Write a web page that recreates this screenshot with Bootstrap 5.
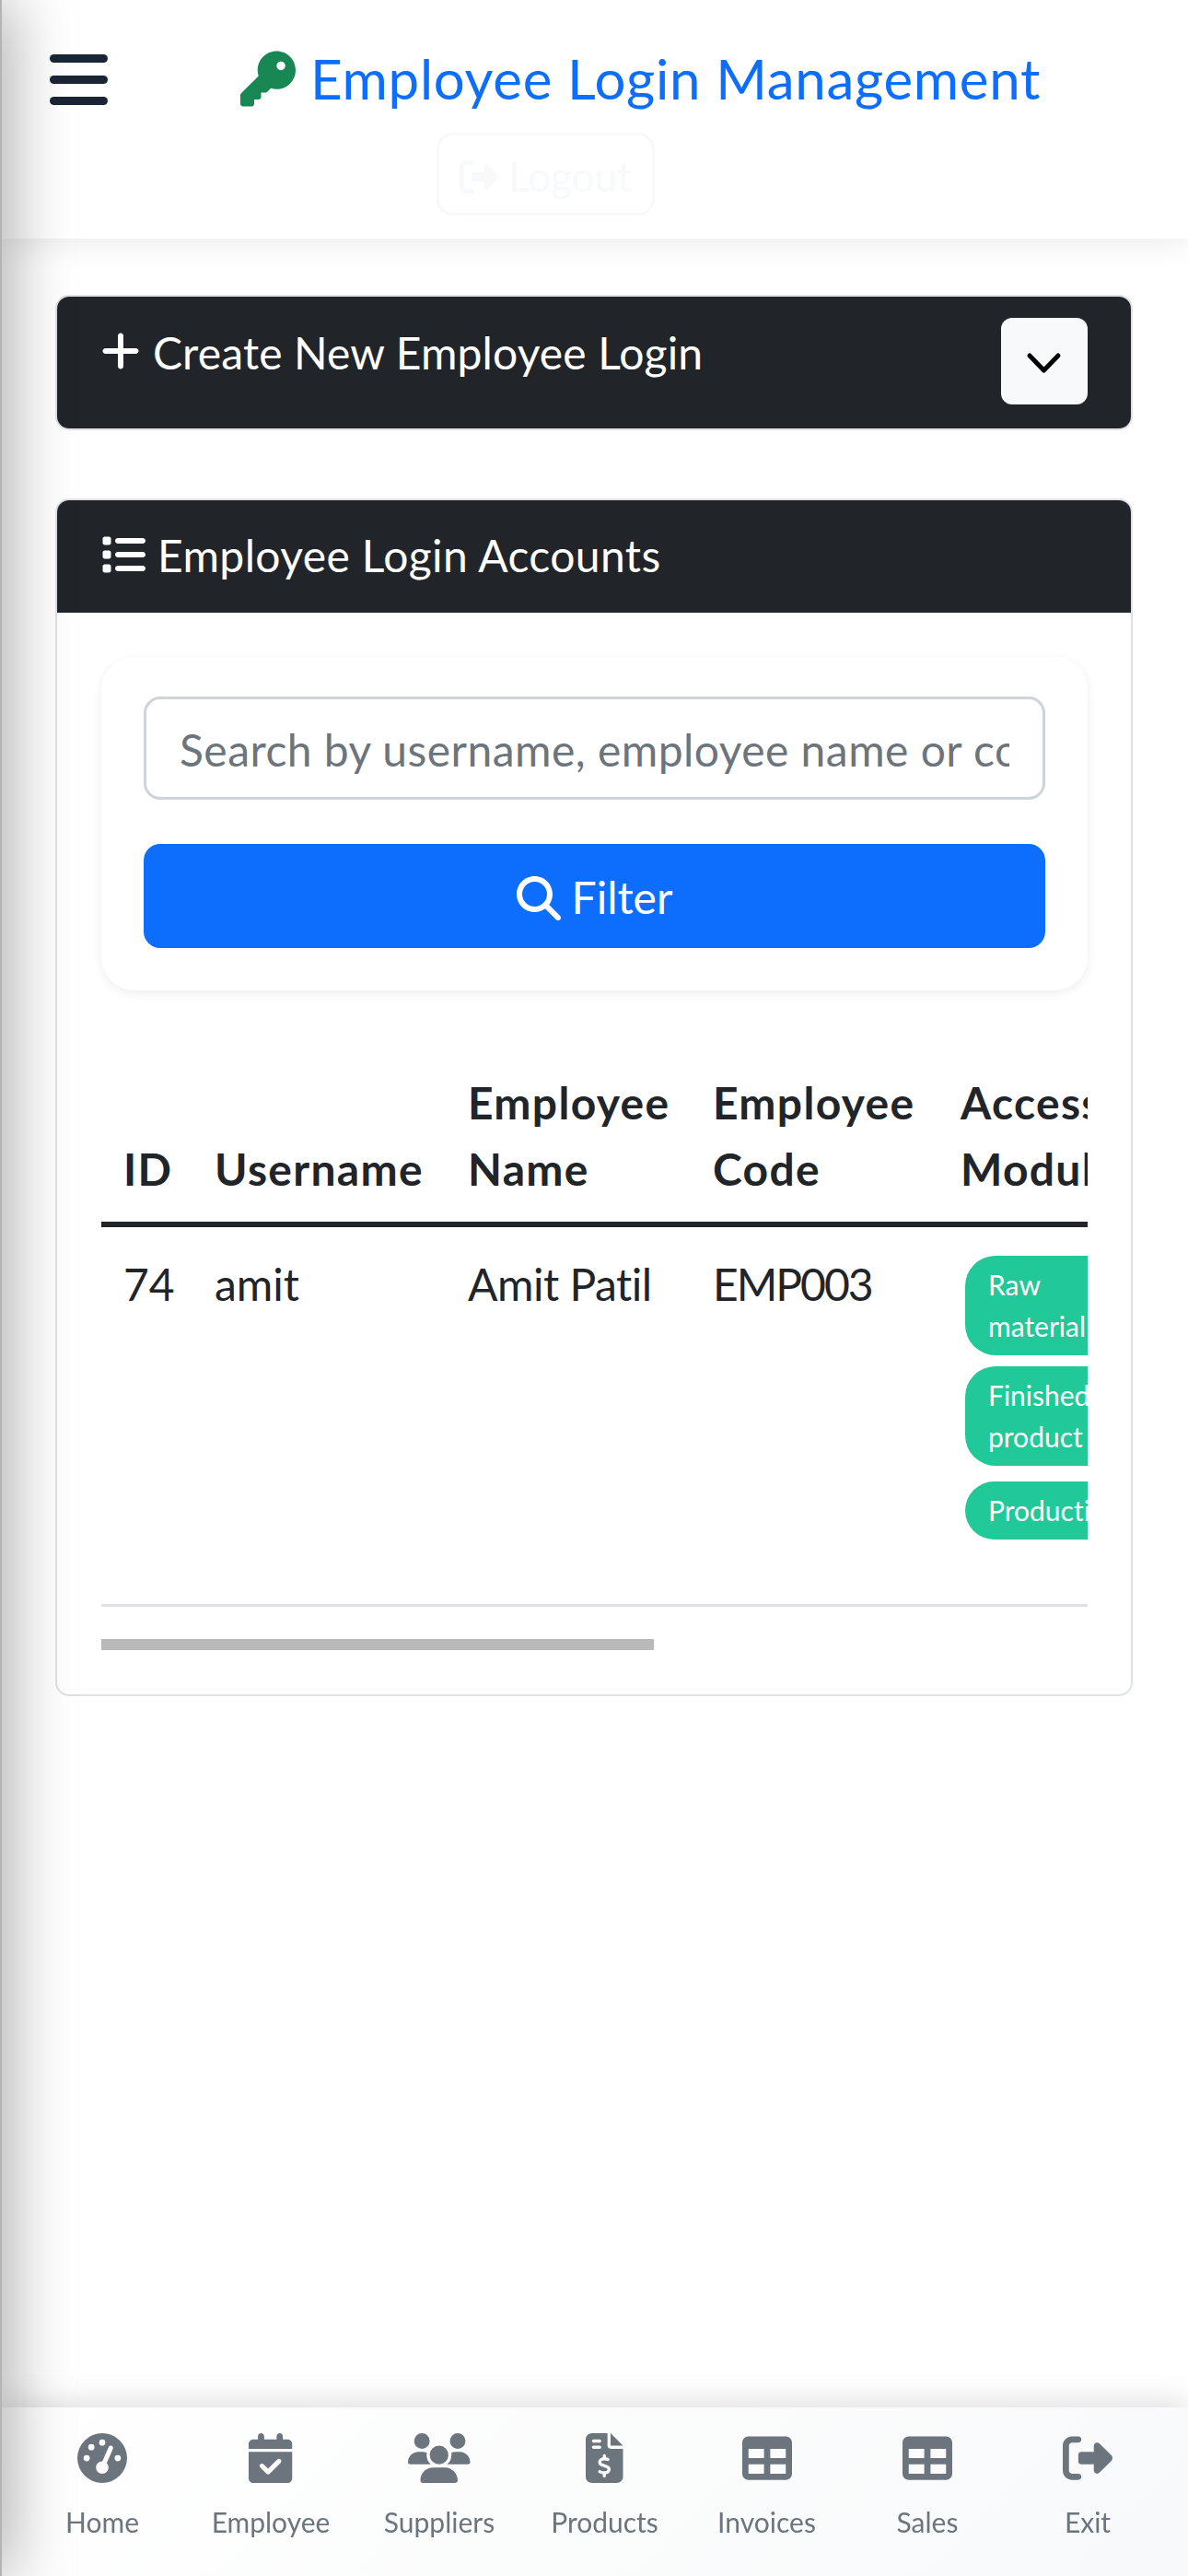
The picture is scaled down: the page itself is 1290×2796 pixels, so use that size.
<!DOCTYPE html>
<html lang="en">
<head>
    <meta charset="UTF-8" />
    <title>Employee Login Management</title>
    <link href="https://cdn.jsdelivr.net/npm/bootstrap@5.3.2/dist/css/bootstrap.min.css" rel="stylesheet" />
    <style>
        html, body { height: 2796px; overflow: hidden; }
        body { font-family: Lato, "Noto Sans", sans-serif; font-size: 48px; background: #fff; color: #212529; line-height: 1.5; font-variant-ligatures: none; }
        svg { fill: currentColor; display: inline-block; }

        .side-shade { position: fixed; top: 0; bottom: 0; left: -38px; width: 40px; background: #b4b4b4; box-shadow: 0 0 70px rgba(0,0,0,.5); z-index: 20; }

        .top-head { height: 259px; background: #fff; box-shadow: 0 6px 30px rgba(0,0,0,.08); padding: 55px 0 0 54px; }
        .burger { width: 63px; gap: 14px; margin-top: 4px; }
        .burger span { display: block; height: 9px; border-radius: 5px; background: #1a2636; }
        .page-title { font-size: 60px; line-height: 61px; color: #0d6efd; margin-left: 144px; white-space: nowrap; letter-spacing: .7px; }
        .page-title svg { width: 60px; height: 61px; color: #198754; margin-right: 16px; vertical-align: top; }
        .logout-btn { width: 237px; height: 90px; margin: 28px 0 0 420px; border: 3px solid #f8f9fa; border-radius: 18px; color: #f8f9fa; background: #fff; font-size: 44px; line-height: 88px; padding: 0; }
        .logout-btn svg { width: 42px; height: 44px; vertical-align: -6px; }

        .page-body { padding: 61px 60px 0; }
        .box-card { border: 2px solid #dee2e6; border-radius: 15px; overflow: hidden; }
        .box-head { background: #212529; color: #fff; }
        .create-head { height: 143px; padding: 0 47px 0 48px; font-size: 48px; letter-spacing: .15px; }
        .create-head .ttl { padding-bottom: 22px; }
        .create-head .ttl svg { width: 42px; height: 48px; margin-right: 14px; vertical-align: -4px; }
        .toggle-btn { width: 94px; height: 94px; margin-bottom: 3px; background: #f8f9fa; border: 0; border-radius: 12px; padding: 0; color: #000; }
        .toggle-btn svg { width: 94px; height: 94px; display: block; fill: none; stroke: #000; stroke-width: 5; stroke-linecap: round; stroke-linejoin: round; }
        .list-card { margin-top: 74px; }
        .list-head { height: 122px; padding: 0 48px; font-size: 48px; line-height: 120px; letter-spacing: .4px; }
        .list-head svg { width: 48px; height: 48px; margin-right: 13px; vertical-align: -5px; }
        .list-body { padding: 48px 47px 48px 48px; }
        .filter-panel { border-radius: 36px; padding: 43px 46px 46px; box-shadow: 0 3px 12px rgba(0,0,0,.07); gap: 48px; }
        .search-box { height: 112px; font-size: 48px; padding: 2px 36px 0; border: 3px solid #ced4da; border-radius: 18px; letter-spacing: .46px; }
        .search-box::placeholder { color: #6c757d; }
        .filter-btn { height: 113px; font-size: 48px; padding-top: 4px; border-radius: 18px; border: 0; background: #0d6efd; color: #fff; }
        .filter-btn svg { width: 48px; height: 48px; margin-right: 12px; vertical-align: -7px; }

        .table-scroll { margin-top: 62px; overflow: hidden; }
        .emp-table { width: 1912px; table-layout: fixed; margin: 0 0 35px; font-size: 48px; }
        .emp-table th, .emp-table td { padding: 24px; line-height: 72px; color: #212529; vertical-align: top; }
        .emp-table thead th { vertical-align: bottom; border-bottom: 6px solid #212529; font-weight: 700; padding-bottom: 21px; letter-spacing: 1.3px; }
        .emp-table tbody td { border-bottom: 3px solid #dee2e6; padding-top: 26px; padding-bottom: 70px; }
        .emp-table td.code-cell { letter-spacing: -2px; }
        .emp-table td.name-cell { letter-spacing: -.5px; }
        .module-pill { display: block; width: 200px; margin: 5px 0 12px 5px; padding: 9px 25px; background: #20c997; color: #fff; font-size: 30px; line-height: 45px; border-radius: 33px; font-weight: 400; }
        .module-pill:nth-child(2) { margin: 0 0 17px 5px; }
        .module-pill:nth-child(3) { margin: 0 0 0 5px; }
        .scroll-thumb { width: 600px; height: 12px; background: #b9b9b9; }

        .bottom-bar { position: fixed; left: 0; right: 0; bottom: 0; height: 183px; background: linear-gradient(135deg, #fff, #f8f9fa); box-shadow: 0 -6px 30px rgba(0,0,0,.13); padding: 28px 0 0 20px; display: grid; grid-template-columns: 182px 184px 182px 177px 175px 174px 174px; z-index: 10; }
        .bar-item { color: #6c757d; text-decoration: none; font-size: 30px; line-height: 45px; }
        .bar-item svg { height: 54px; width: auto; display: block; margin: 0 auto 20px; }
    </style>
</head>
<body>
<div class="side-shade"></div>

<header class="top-head">
    <div class="d-flex align-items-start">
        <div class="burger d-flex flex-column"><span></span><span></span><span></span></div>
        <div class="page-title">
            <svg viewBox="0 0 512 512"><path d="M336 352c97.2 0 176-78.8 176-176S433.2 0 336 0S160 78.8 160 176c0 18.7 2.9 36.8 8.3 53.7L7 391c-4.5 4.5-7 10.6-7 17v80c0 13.3 10.7 24 24 24h80c13.3 0 24-10.7 24-24V448h40c13.3 0 24-10.7 24-24V384h40c6.4 0 12.5-2.5 17-7l33.3-33.3c16.9 5.4 35 8.3 53.7 8.3zM376 96a40 40 0 1 1 0 80 40 40 0 1 1 0-80z"/></svg>Employee Login Management
        </div>
    </div>
    <button class="logout-btn d-block" type="button">
        <svg viewBox="0 0 512 512"><path d="M377.9 105.9L500.7 228.7c7.2 7.2 11.3 17.1 11.3 27.3s-4.1 20.1-11.3 27.3L377.9 406.1c-6.4 6.4-15 9.9-24 9.9c-18.7 0-33.9-15.2-33.9-33.9l0-62.1-128 0c-17.7 0-32-14.3-32-32l0-64c0-17.7 14.3-32 32-32l128 0 0-62.1c0-18.7 15.2-33.9 33.9-33.9c9 0 17.6 3.6 24 9.9zM160 96L96 96c-17.7 0-32 14.3-32 32l0 256c0 17.7 14.3 32 32 32l64 0c17.7 0 32 14.3 32 32s-14.3 32-32 32l-64 0c-53 0-96-43-96-96L0 128C0 75 43 32 96 32l64 0c17.7 0 32 14.3 32 32s-14.3 32-32 32z"/></svg> Logout
    </button>
</header>

<main class="page-body">
    <div class="box-card">
        <div class="box-head create-head d-flex justify-content-between align-items-center">
            <span class="ttl"><svg viewBox="0 0 448 512"><path d="M256 80c0-17.7-14.3-32-32-32s-32 14.3-32 32V224H48c-17.7 0-32 14.3-32 32s14.3 32 32 32H192V432c0 17.7 14.3 32 32 32s32-14.3 32-32V288H400c17.7 0 32-14.3 32-32s-14.3-32-32-32H256V80z"/></svg>Create New Employee Login</span>
            <button class="toggle-btn" type="button"><svg viewBox="0 0 94 94"><path d="M31 41l15.5 16L62 41"/></svg></button>
        </div>
    </div>

    <div class="box-card list-card">
        <div class="box-head list-head">
            <svg viewBox="0 0 512 512"><path d="M40 48C26.7 48 16 58.7 16 72v48c0 13.3 10.7 24 24 24H88c13.3 0 24-10.7 24-24V72c0-13.3-10.7-24-24-24H40zM192 64c-17.7 0-32 14.3-32 32s14.3 32 32 32H480c17.7 0 32-14.3 32-32s-14.3-32-32-32H192zm0 160c-17.7 0-32 14.3-32 32s14.3 32 32 32H480c17.7 0 32-14.3 32-32s-14.3-32-32-32H192zm0 160c-17.7 0-32 14.3-32 32s14.3 32 32 32H480c17.7 0 32-14.3 32-32s-14.3-32-32-32H192zM16 232v48c0 13.3 10.7 24 24 24H88c13.3 0 24-10.7 24-24V232c0-13.3-10.7-24-24-24H40c-13.3 0-24 10.7-24 24zM40 368c-13.3 0-24 10.7-24 24v48c0 13.3 10.7 24 24 24H88c13.3 0 24-10.7 24-24V392c0-13.3-10.7-24-24-24H40z"/></svg>Employee Login Accounts
        </div>
        <div class="list-body">
            <form class="filter-panel d-flex flex-column">
                <input class="form-control search-box" type="text" placeholder="Search by username, employee name or code" />
                <button class="filter-btn" type="button"><svg viewBox="0 0 512 512"><path d="M416 208c0 45.9-14.9 88.3-40 122.7L502.6 457.4c12.5 12.5 12.5 32.8 0 45.3s-32.8 12.5-45.3 0L330.7 376c-34.4 25.2-76.8 40-122.7 40C93.1 416 0 322.9 0 208S93.1 0 208 0S416 93.1 416 208zM208 352a144 144 0 1 0 0-288 144 144 0 1 0 0 288z"/></svg>Filter</button>
            </form>

            <div class="table-scroll">
                <table class="table emp-table">
                    <colgroup>
                        <col style="width:99px" /><col style="width:275px" /><col style="width:266px" /><col style="width:269px" /><col />
                    </colgroup>
                    <thead>
                        <tr><th>ID</th><th>Username</th><th>Employee Name</th><th>Employee Code</th><th>Access<br />Modules</th></tr>
                    </thead>
                    <tbody>
                        <tr>
                            <td>74</td>
                            <td>amit</td>
                            <td class="name-cell">Amit Patil</td>
                            <td class="code-cell">EMP003</td>
                            <td>
                                <span class="module-pill">Raw material</span>
                                <span class="module-pill">Finished product</span>
                                <span class="module-pill">Production</span>
                            </td>
                        </tr>
                    </tbody>
                </table>
                <div class="scroll-thumb"></div>
            </div>
        </div>
    </div>
</main>

<nav class="bottom-bar text-center">
    <a class="bar-item" href="#"><svg viewBox="0 0 512 512"><path d="M0 256a256 256 0 1 1 512 0A256 256 0 1 1 0 256zM288 96a32 32 0 1 0 -64 0 32 32 0 1 0 64 0zM256 416c35.3 0 64-28.7 64-64c0-17.4-6.9-33.1-18.1-44.6L366 161.7c5.3-12.1-.2-26.3-12.3-31.6s-26.3 .2-31.6 12.3L257.9 288c-.6 0-1.3 0-1.9 0c-35.3 0-64 28.7-64 64s28.7 64 64 64zM176 144a32 32 0 1 0 -64 0 32 32 0 1 0 64 0zM96 288a32 32 0 1 0 0-64 32 32 0 1 0 0 64zm352-32a32 32 0 1 0 -64 0 32 32 0 1 0 64 0z"/></svg>Home</a>
    <a class="bar-item" href="#"><svg viewBox="0 0 448 512"><path d="M128 0c17.7 0 32 14.3 32 32V64H288V32c0-17.7 14.3-32 32-32s32 14.3 32 32V64h48c26.5 0 48 21.5 48 48v48H0V112C0 85.5 21.5 64 48 64H96V32c0-17.7 14.3-32 32-32zM0 192H448V464c0 26.5-21.5 48-48 48H48c-26.5 0-48-21.5-48-48V192zM329 305c9.4-9.4 9.4-24.6 0-33.9s-24.6-9.4-33.9 0l-95 95-47-47c-9.4-9.4-24.6-9.4-33.9 0s-9.4 24.6 0 33.9l64 64c9.4 9.4 24.6 9.4 33.9 0L329 305z"/></svg>Employee</a>
    <a class="bar-item" href="#"><svg viewBox="0 0 640 512"><path d="M144 0a80 80 0 1 1 0 160A80 80 0 1 1 144 0zM512 0a80 80 0 1 1 0 160A80 80 0 1 1 512 0zM0 298.7C0 239.8 47.8 192 106.7 192h42.7c15.9 0 31 3.5 44.6 9.7c-1.3 7.2-1.9 14.7-1.9 22.3c0 38.2 16.8 72.5 43.3 96c-.2 0-.4 0-.7 0H21.3C9.6 320 0 310.4 0 298.7zM405.3 320c-.2 0-.4 0-.7 0c26.6-23.5 43.3-57.8 43.3-96c0-7.6-.7-15-1.9-22.3c13.6-6.3 28.7-9.7 44.6-9.7h42.7C592.2 192 640 239.8 640 298.7c0 11.8-9.6 21.3-21.3 21.3H405.3zM224 224a96 96 0 1 1 192 0 96 96 0 1 1 -192 0zM128 485.3C128 411.7 187.7 352 261.3 352H378.7C452.3 352 512 411.7 512 485.3c0 14.7-11.9 26.7-26.7 26.7H154.7c-14.7 0-26.7-11.9-26.7-26.7z"/></svg>Suppliers</a>
    <a class="bar-item" href="#"><svg viewBox="0 0 384 512"><path d="M64 0C28.7 0 0 28.7 0 64V448c0 35.3 28.7 64 64 64H320c35.3 0 64-28.7 64-64V160H256c-17.7 0-32-14.3-32-32V0H64zM256 0V128H384L256 0zM64 80c0-8.8 7.2-16 16-16h64c8.8 0 16 7.2 16 16s-7.2 16-16 16H80c-8.8 0-16-7.2-16-16zm0 64c0-8.8 7.2-16 16-16h64c8.8 0 16 7.2 16 16s-7.2 16-16 16H80c-8.8 0-16-7.2-16-16zm128 72c8.8 0 16 7.2 16 16v17.3c8.5 1.2 16.7 3.1 24.1 5.1c8.5 2.3 13.6 11 11.3 19.6s-11 13.6-19.6 11.3c-11.1-3-22-5.2-32.1-5.3c-8.4-.1-17.4 1.8-23.6 5.5c-5.7 3.4-8.1 7.3-8.1 12.8c0 3.7 1.3 6.5 7.3 10.1c6.9 4.1 16.6 7.1 29.2 10.9l.5 .1 0 0 0 0c11.3 3.4 25.3 7.6 36.3 14.6c12.1 7.6 22.4 19.7 22.7 38.2c.3 19.3-9.6 33.3-22.9 41.6c-7.7 4.8-16.4 7.6-25.1 9.1V440c0 8.8-7.2 16-16 16s-16-7.2-16-16V422.2c-11.2-2.1-21.7-5.7-30.9-8.9l0 0c-2.1-.7-4.2-1.4-6.2-2.1c-8.4-2.8-12.9-11.9-10.1-20.2s11.9-12.9 20.2-10.1c2.5 .8 4.8 1.6 7.1 2.4l0 0 0 0 0 0c13.6 4.6 24.6 8.4 36.3 8.7c9.1 .3 17.9-1.7 23.7-5.3c5.1-3.2 7.9-7.3 7.8-14c-.1-4.6-1.8-7.8-7.7-11.6c-6.8-4.3-16.5-7.4-29-11.2l-1.6-.5 0 0c-11-3.3-24.3-7.3-34.8-13.7c-12-7.2-22.6-18.9-22.7-37.3c-.1-19.4 10.8-32.8 23.8-40.5c7.5-4.4 15.8-7.2 24.1-8.7V232c0-8.8 7.2-16 16-16z"/></svg>Products</a>
    <a class="bar-item" href="#"><svg viewBox="0 0 512 512"><path d="M64 256V160H224v96H64zm0 64H224v96H64V320zm224 96V320H448v96H288zM448 256H288V160H448v96zM64 32C28.7 32 0 60.7 0 96V416c0 35.3 28.7 64 64 64H448c35.3 0 64-28.7 64-64V96c0-35.3-28.7-64-64-64H64z"/></svg>Invoices</a>
    <a class="bar-item" href="#"><svg viewBox="0 0 512 512"><path d="M64 256V160H224v96H64zm0 64H224v96H64V320zm224 96V320H448v96H288zM448 256H288V160H448v96zM64 32C28.7 32 0 60.7 0 96V416c0 35.3 28.7 64 64 64H448c35.3 0 64-28.7 64-64V96c0-35.3-28.7-64-64-64H64z"/></svg>Sales</a>
    <a class="bar-item" href="#"><svg viewBox="0 0 512 512"><path d="M377.9 105.9L500.7 228.7c7.2 7.2 11.3 17.1 11.3 27.3s-4.1 20.1-11.3 27.3L377.9 406.1c-6.4 6.4-15 9.9-24 9.9c-18.7 0-33.9-15.2-33.9-33.9l0-62.1-128 0c-17.7 0-32-14.3-32-32l0-64c0-17.7 14.3-32 32-32l128 0 0-62.1c0-18.7 15.2-33.9 33.9-33.9c9 0 17.6 3.6 24 9.9zM160 96L96 96c-17.7 0-32 14.3-32 32l0 256c0 17.7 14.3 32 32 32l64 0c17.7 0 32 14.3 32 32s-14.3 32-32 32l-64 0c-53 0-96-43-96-96L0 128C0 75 43 32 96 32l64 0c17.7 0 32 14.3 32 32s-14.3 32-32 32z"/></svg>Exit</a>
</nav>

<script src="https://cdn.jsdelivr.net/npm/bootstrap@5.3.2/dist/js/bootstrap.bundle.min.js"></script>
</body>
</html>
